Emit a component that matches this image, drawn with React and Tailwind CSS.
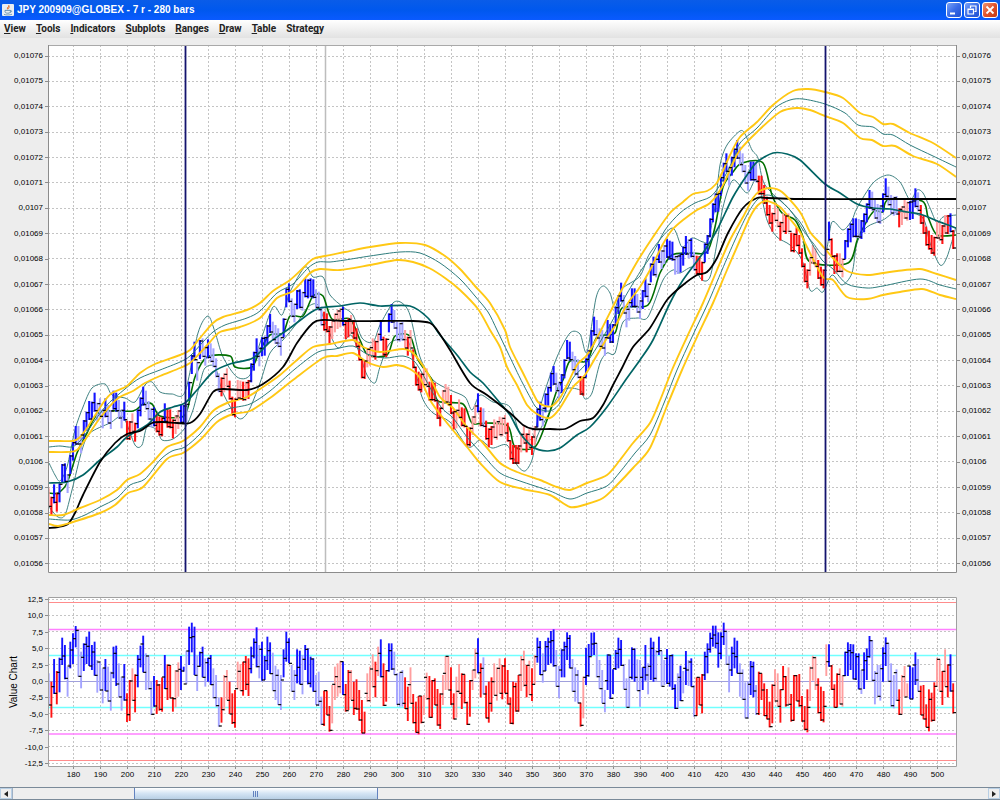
import React from "react";

const FIRST_BAR = 171;
const BAR_STEP = 2.7;
const barX = (n) => 73 + (n - 180) * BAR_STEP;

const COLORS = { B: "#1414ff", b: "#a4a4ff", R: "#ff1414", r: "#ff9f9f" };

// Top of each seven-tick range bar, in thirds of a chart unit, from bar 171 on.
const PRICE_BARS = `r1465 R1490 B1453 R1478 B1450 B1392 B1390 b1422 B1365
B1325 B1278 b1278 b1302 B1260 B1235 B1203 B1205 B1178 b1208
b1195 b1228 B1195 b1215 b1230 B1172 B1178 b1200 b1228 B1205
R1262 R1263 r1240 R1268 B1228 B1192 B1160 b1172 b1203 b1225
B1222 R1240 R1250 R1252 B1210 R1226 R1228 R1258 r1245 r1230
B1213 B1215 b1210 B1145 B1065 B1025 b1085 B1020 b1015 b1040
B1018 b1030 b1045 b1075 b1120 R1132 r1120 r1105 R1142 R1190
R1195 r1140 r1142 R1145 r1145 R1140 B1090 B1055 B1015 b1042
B1012 B1010 B975 B942 b965 b975 b985 b1010 B955 B865
B850 b895 b910 B870 B868 b875 B835 B838 B835 B838
b868 b875 b920 R935 R940 R978 r960 r940 r930 r925
B920 R960 R955 r945 R960 R985 R1025 R1078 R1080 r1045
r1040 r1015 R1022 r1000 B965 R1010 R1015 B940 B912 b930
b965 b968 b965 r990 R1010 r990 R1048 R1100 R1115 R1120
r1100 r1105 R1145 R1145 R1148 R1200 R1222 r1170 r1152 r1160
R1185 R1232 r1228 r1198 R1222 R1225 R1280 R1282 r1248 r1215
B1180 R1222 b1225 R1262 R1285 R1278 r1258 r1262 r1250 r1252
r1245 R1268 R1322 R1335 R1335 R1335 r1300 r1275 R1300 r1288
R1308 r1278 B1225 B1205 b1222 B1180 B1160 B1118 B1098 b1118
b1145 B1122 B1078 B1020 B1025 b1055 b1068 b1078 R1128 R1130
B1075 B1050 B990 B950 b960 b985 b990 b1010 B960 B972
B972 B920 B885 B848 b885 b925 b905 B865 B865 b882
b900 B870 B835 b850 B790 B770 b775 B732 b750 b735
B717 B722 B725 b767 b765 B760 B740 B708 b718 B715
b755 R767 R768 R785 B730 B705 B655 B610 B580 B578
B530 B488 B460 b500 B470 B445 B420 b440 b460 b495
b515 B485 B485 b490 R527 R527 R555 R590 R615 R638
r607 r625 R665 r640 R645 r640 R698 R700 R682 R705
R745 R790 R808 r770 r735 r745 R780 R800 R808 r745
B665 R715 R765 R760 r760 r775 B720 B685 B670 B655
B655 b657 B660 B640 B610 B570 b575 b600 b612 b615
B580 B535 b560 b585 b590 b588 R625 r618 r600 r605
B603 B600 B565 b577 R615 R645 R680 R692 R705 R710
r660 r665 R675 r645 R645 B640 R690`
  .split(/\s+/)
  .map((s) => ({ color: COLORS[s[0]], top: Number(s.slice(1)) / 3 }));

// High, low and close of the value chart, in thirds of a chart unit below 590.
const VALUE_BARS = `b250,345,345 R275,383,290 B207,312,310 R243,343,247 B203,307,208 B143,225,198 B165,268,265 b230,320,228 B155,235,180
B130,222,146 B108,172,121 b120,260,259 b185,295,202 B160,243,163 B140,222,169 B125,228,228 B165,240,186 B155,257,256 b210,308,216
b215,302,300 b235,340,234 B207,303,303 b230,335,333 b245,362,249 B170,265,190 B167,288,282 b220,322,321 b260,362,261 B222,332,330
R310,396,374 R270,393,273 r235,332,331 R253,367,256 B195,292,208 B167,232,162 B137,247,247 b190,300,198 b195,298,296 b275,375,373
B258,350,348 R270,372,285 R282,362,358 R262,365,261 B195,297,296 R223,330,226 R225,325,324 R322,365,326 r240,352,243 r217,320,238
B198,300,243 B230,245,282 b182,282,183 B110,225,143 B98,187,140 B110,255,256 b195,303,229 B185,230,188 B170,262,262 b205,290,218
B203,275,205 B195,285,284 b235,325,323 b255,350,347 b322,410,408 R322,398,359 r255,362,260 r240,330,331 R275,372,372 R310,402,398
R300,413,296 r215,298,244 r222,303,302 R215,317,216 R198,300,283 R205,318,236 B170,250,198 B145,205,157 B112,232,230 b165,265,178
B155,272,270 B198,270,212 B140,240,182 B157,252,251 b188,302,302 b227,330,256 b238,345,344 b255,360,270 B178,262,205 B125,215,157
B145,220,220 b225,305,304 b240,330,256 B178,280,232 B182,283,283 b195,313,208 B165,240,178 B175,283,280 B200,292,207 B205,305,304
b255,345,345 b245,348,334 b320,405,403 R302,408,302 R302,375,375 R348,425,421 r285,400,283 r230,330,260 r220,320,290 r212,310,215
B215,315,314 R282,365,362 R240,360,247 r240,330,331 R275,375,355 R268,360,357 R300,392,390 R330,430,429 R365,430,310 r250,335,332
r230,335,237 r193,292,290 R215,322,242 r170,258,190 B148,262,260 R220,348,346 R240,335,242 B160,245,182 B160,240,237 b185,255,254
b250,345,343 b248,350,247 b240,350,340 R262,357,356 R290,393,284 r232,340,340 R312,400,398 R335,428,427 R318,433,318 R318,400,397
r315,375,262 r248,330,326 R258,383,382 R270,383,272 R265,345,345 R297,407,405 R310,417,312 r255,345,250 r198,300,199 r198,300,300
R232,345,342 R310,388,387 r260,383,304 r222,310,310 R250,357,253 R253,340,338 R335,405,403 R270,380,272 r240,300,240 r175,265,190
B145,250,248 R220,322,235 b202,313,312 R287,385,384 R275,398,340 R262,365,275 r220,316,316 r232,332,235 r205,310,310 R225,328,228
R205,310,310 R240,343,342 R322,402,400 R275,403,290 R278,365,363 R255,365,255 r198,303,209 r182,290,286 R225,322,226 r212,315,314
R235,333,283 r195,285,200 B143,218,172 B153,255,254 b190,278,243 B153,243,170 B143,225,156 B123,220,152 B118,230,227 b180,290,289
b228,325,240 B178,262,180 B155,262,170 B127,210,145 B135,235,234 b207,305,304 b232,335,255 b240,340,339 R338,410,406 r260,385,262
B173,285,257 B162,260,200 B128,198,162 B127,195,160 b160,262,260 b210,297,296 b240,340,340 b300,367,272 B193,300,195 B195,327,325
B238,312,236 B180,240,190 B143,235,178 B150,228,226 b222,298,298 b265,352,352 b208,352,262 B172,268,178 B175,275,262 b208,303,302
b210,350,262 B232,300,232 B165,272,255 b220,313,229 B143,270,175 B155,275,265 b180,272,185 B140,195,182 b182,290,289 b210,285,205
B177,282,280 B195,290,197 B193,300,296 B283,357,355 b250,357,262 B227,333,332 b243,310,235 B183,285,240 b210,288,216 B205,290,290
b285,380,377 R262,378,262 R262,345,345 R252,370,255 B185,270,200 B160,250,178 B128,188,145 B107,170,135 B107,175,160 B127,233,190
B127,208,140 B98,165,124 b122,225,223 b197,307,240 B170,258,190 B143,235,200 B152,250,250 b220,320,250 b238,330,328 b277,385,384
b275,385,283 B213,315,230 B215,322,303 b285,375,371 R245,375,250 R250,330,300 R280,378,377 R297,388,387 R335,412,410 R283,400,286
r238,335,333 r250,350,349 R298,398,299 R228,300,260 R258,350,345 r232,342,343 R312,395,391 R255,392,257 R255,333,333 R252,350,347
R318,395,393 R348,420,418 R298,427,352 r230,333,234 r197,272,203 r200,300,285 R265,370,368 R290,393,390 R303,397,349 r163,258,215
B163,230,228 R225,300,298 R283,353,352 R250,352,253 r235,343,342 r257,350,257 B185,258,187 B157,258,182 B162,240,188 B163,268,267
B190,270,200 B190,298,297 b240,312,240 B187,297,212 B175,270,200 B138,203,152 b150,273,271 b243,343,250 b225,320,319 b225,332,236
B172,275,190 B142,228,160 b158,275,274 b220,350,347 b255,355,248 b238,333,331 R298,375,373 r255,373,260 r228,320,321 r280,320,228
B228,328,327 B232,328,225 B187,285,270 b207,305,304 R287,375,375 R285,388,387 R343,412,412 R298,424,328 R308,395,391 R277,393,289
r203,290,208 r207,305,304 R243,345,244 r178,290,290 R223,322,225 B193,305,303 R280,370,368`
  .split(/\s+/)
  .map((s) => {
    const [hi, lo, close] = s.slice(1).split(",").map((v) => 590 + Number(v) / 3);
    return { color: COLORS[s[0]], hi, lo, close };
  });

const BANDS = {
  u1: "49,441 60,441 73,441 79,438 87,428 103,403 112,393 127,386 140,373 155,364 180,355 190,350 200,338 213,323 223,317 247,310 260,303 273,291 290,280 303,268 313,259 325,256 345,252 370,247 400,243 425,245 445,256 460,269 475,286 490,303 505,330 510,347 523,373 533,393 538,402 545,406 552,406 560,398 567,385 577,365 587,355 597,338 620,293 637,262 653,237 670,213 683,202 693,194 707,191 716,184 722,173 730,155 740,137 757,122 773,105 793,91 808,89 825,92 843,98 860,113 873,117 883,124 893,124 910,133 933,143 956,158",
  u2: "49,447 60,446 72,447 80,441 87,432 105,407 125,389 140,378 160,370 180,362 190,356 203,342 213,332 225,325 247,318 260,311 277,293 293,284 308,268 318,262 330,262 345,260 370,256 400,252 420,253 440,263 460,279 475,296 488,312 497,330 508,353 520,378 530,397 537,408 550,411 560,403 573,378 585,365 597,347 610,325 625,297 640,272 653,253 665,230 680,213 695,203 710,197 720,185 733,160 740,143 757,128 775,108 790,100 803,99 825,104 845,113 858,125 873,127 883,134 893,135 910,145 933,156 956,167",
  u3: "49,452 67,452 77,450 87,437 100,418 117,399 133,391 145,383 160,376 180,368 190,363 200,353 210,342 220,332 240,327 260,318 277,298 293,291 310,273 320,269 340,270 370,265 397,260 413,262 429,268 445,278 460,290 478,309 490,330 500,347 507,367 517,385 527,405 537,414 550,418 560,408 573,387 585,375 597,355 607,338 617,323 628,303 640,287 650,270 663,244 672,230 683,220 697,210 710,203 722,187 733,163 740,150 757,132 780,112 797,108 810,110 825,116 843,123 860,138 872,140 883,146 895,146 913,156 937,164 956,177",
  l1: "49,515 63,515 80,508 100,500 117,490 127,480 140,474 153,462 167,447 183,441 200,427 213,411 227,403 247,397 263,387 280,375 297,360 313,347 330,344 353,340 363,347 380,352 403,349 413,353 427,372 440,397 453,408 467,427 483,443 500,463 517,472 540,480 557,487 570,490 587,483 607,475 620,460 633,443 650,423 661,398 672,370 687,337 703,303 717,270 730,240 743,217 753,198 760,191 770,188 782,192 800,212 810,232 820,243 833,258 847,271 867,275 883,273 897,271 920,269 937,274 956,280",
  l2: "49,519 70,520 85,515 100,507 117,498 130,485 145,479 160,460 172,451 185,447 200,434 213,418 228,409 250,404 270,391 295,369 318,352 335,349 353,346 367,354 385,358 403,356 415,362 427,382 441,407 453,418 467,437 483,455 500,473 520,481 550,491 570,499 587,493 607,486 620,472 635,453 650,435 664,403 677,370 692,337 708,303 722,270 735,240 747,215 757,200 767,195 780,200 800,222 810,240 822,260 833,269 847,284 867,288 883,286 920,279 940,285 956,289",
  l3: "49,524 58,526 70,523 100,513 115,505 128,493 143,487 167,459 183,453 200,440 217,422 233,414 250,411 270,398 293,380 323,358 337,356 353,353 367,362 383,367 397,365 410,369 420,378 430,400 443,418 467,447 480,463 500,482 523,489 550,495 570,507 587,504 603,498 617,485 633,468 650,448 667,406 682,370 697,337 713,303 727,270 740,240 750,217 758,205 767,201 780,207 790,219 800,232 807,247 823,277 833,280 847,297 867,299 883,295 900,292 922,289 940,295 956,299",
};

const BLACK =
  "49,528 58,527 68,524 75,513 83,495 100,462 115,443 127,434 140,431 152,423 163,422 177,423 190,423 200,414 213,392 223,389 247,390 263,384 283,367 297,343 313,323 323,320 345,321 380,321 413,321 430,323 437,330 450,350 470,383 487,395 510,413 523,425 533,429 550,429 565,429 580,421 593,418 603,405 613,385 622,368 633,347 650,328 667,300 683,285 697,275 707,272 717,258 728,233 743,208 757,198 767,198 800,199 880,199 956,199";
const TEAL =
  "49,483 67,482 83,475 100,460 117,447 127,437 147,425 160,412 173,407 185,403 197,390 213,372 230,364 253,358 270,342 290,328 310,313 320,308 340,306 360,303 380,306 410,306 428,318 440,335 457,355 470,372 483,383 500,403 510,415 520,433 533,447 547,451 560,448 577,435 590,427 607,407 627,378 640,360 653,340 670,303 683,280 703,253 717,230 733,197 747,175 757,162 773,153 787,154 800,160 825,184 840,193 857,204 873,208 890,209 907,212 920,214 940,222 956,228";
const GREEN =
  "49,493 58,493 67,483 77,453 87,433 100,412 133,411 143,404 152,404 160,416 182,417 188,407 195,377 207,357 230,356 235,367 252,367 260,350 270,335 283,333 290,316 303,316 313,296 323,296 332,319 350,319 360,340 368,355 387,355 395,336 410,336 418,360 432,380 438,401 463,404 472,423 487,423 508,426 515,447 535,447 547,420 557,390 563,380 570,361 587,361 597,337 615,333 622,308 648,305 660,273 672,255 690,253 707,252 715,227 723,187 733,172 742,163 763,163 772,195 782,213 795,220 803,237 810,262 848,263 858,238 873,212 883,212 888,200 922,201 928,217 937,235 956,235";
const ENVELOPE_TOP =
  "49,463 55,475 60,481 67,467 75,430 83,407 92,388 105,384 112,395 125,398 135,402 145,385 152,382 160,392 172,394 185,392 198,333 208,316 215,332 223,357 237,377 250,375 260,343 273,307 282,315 290,292 305,267 313,277 323,277 330,295 343,307 353,315 362,338 373,342 380,325 393,303 402,303 410,315 420,357 433,380 450,390 465,397 472,410 480,395 493,402 510,407 521,436 533,437 543,397 557,357 570,333 580,334 587,352 596,298 603,286 610,293 615,308 622,289 640,276 650,253 672,228 682,247 692,238 703,242 708,240 715,207 720,165 727,145 740,131 745,134 752,150 758,158 765,185 790,210 803,230 813,243 825,255 832,222 843,230 852,220 857,208 873,183 888,175 900,182 910,200 917,190 923,193 930,208 937,223 943,217 956,215";
const ENVELOPE_BOTTOM =
  "49,507 58,517 65,515 72,490 82,450 90,433 110,423 123,417 135,445 142,445 147,427 157,430 162,440 173,439 185,428 193,410 200,383 205,368 215,367 223,393 238,418 248,412 260,383 270,353 283,340 297,323 308,307 318,305 327,327 338,348 350,335 357,347 367,375 375,383 380,367 390,343 407,340 413,360 422,397 433,413 450,422 468,447 480,440 492,448 507,445 517,465 525,471 532,460 537,437 547,417 563,390 580,390 585,399 592,393 600,363 607,353 615,353 623,322 637,318 648,317 663,280 673,270 680,273 693,267 702,280 710,277 717,243 723,207 733,180 747,193 757,180 767,220 777,237 790,245 802,260 810,290 817,288 823,292 832,275 842,285 852,273 857,243 867,227 883,220 897,212 922,217 930,243 940,265 947,257 956,227";

function smooth(points) {
  const p = points.split(" ").map((s) => s.split(",").map(Number));
  let d = `M${p[0][0]} ${p[0][1]}`;
  for (let i = 0; i < p.length - 1; i++) {
    const a = p[i - 1] || p[i];
    const b = p[i];
    const c = p[i + 1];
    const e = p[i + 2] || c;
    const k = 7;
    d += `C${b[0] + (c[0] - a[0]) / k} ${b[1] + (c[1] - a[1]) / k} ${c[0] - (e[0] - b[0]) / k} ${c[1] - (e[1] - b[1]) / k} ${c[0]} ${c[1]}`;
  }
  return d;
}

const range = (n) => Array.from({ length: n }, (_, i) => i);
const GRID_X = range(33).map((i) => 73 + i * 27);
const PRICE_LABELS = range(21).map((i) => {
  const v = 1076 - i;
  return v % 10 === 0 ? `0,0${v / 10}` : `0,0${v}`;
});
const VALUE_LABELS = ["12,5", "10,0", "7,5", "5,0", "2,5", "0,0", "-2,5", "-5,0", "-7,5", "-10,0", "-12,5"];

function Curve({ points, color, width = 1 }) {
  return <path d={smooth(points)} fill="none" stroke={color} strokeWidth={width} strokeLinejoin="round" />;
}

function Grid({ y0, y1, rows }) {
  return (
    <g stroke="#c4c4c4" strokeWidth="1" strokeDasharray="2 2">
      {GRID_X.map((x) => (
        <path key={x} d={`M${x + 0.5} ${y0}V${y1}`} />
      ))}
      {rows.map((y) => (
        <path key={y} d={`M48 ${Math.floor(y) + 0.5}H957`} />
      ))}
    </g>
  );
}

function PriceChart() {
  const height = 19;
  return (
    <svg viewBox="48 45 909 528" preserveAspectRatio="none" className="block h-full w-full bg-white" role="img" aria-label="Price chart">
      <Grid y0={45} y1={573} rows={range(21).map((i) => 56 + i * 25.37)} />
      <path d="M325.5 45V573" stroke="#bdbdbd" strokeWidth="1.5" />
      <Curve points={ENVELOPE_TOP} color="#3f8282" />
      <Curve points={ENVELOPE_BOTTOM} color="#3f8282" />
      <Curve points={GREEN} color="#006e00" width={1.6} />
      {PRICE_BARS.map((bar, i) => (
        <path key={i} d={`M${barX(FIRST_BAR + i)} ${bar.top}v${height}`} stroke={bar.color} strokeWidth="2.1" />
      ))}
      <Curve points={BANDS.u2} color="#2d7c7c" />
      <Curve points={BANDS.l2} color="#2d7c7c" />
      <Curve points={TEAL} color="#006464" width={1.7} />
      <Curve points={BLACK} color="#000000" width={1.8} />
      {["u1", "u3", "l1", "l3"].map((k) => (
        <Curve key={k} points={BANDS[k]} color="#ffc814" width={1.9} />
      ))}
      {PRICE_BARS.map((bar, i) => {
        const next = PRICE_BARS[i + 1] || bar;
        const close = next.top >= bar.top ? bar.top + height - 1 : bar.top + 1;
        return <path key={i} d={`M${barX(FIRST_BAR + i)} ${close}h3`} stroke="#000" strokeWidth="1.2" />;
      })}
      <path d="M185.5 45V573M825.5 45V573" stroke="#14146e" strokeWidth="1.8" />
      <path d="M48 45.5H957" stroke="#a9a9a9" />
      <path d="M48.5 45V572.5H956.5V45" fill="none" stroke="#8c8c8c" />
    </svg>
  );
}

function ValueChart() {
  return (
    <svg viewBox="48 597 909 170" preserveAspectRatio="none" className="block h-full w-full bg-white" role="img" aria-label="Value chart">
      <Grid y0={597} y1={767} rows={range(11).map((i) => 599 + i * 16.4)} />
      <path d="M48 602.5H957M48 760.5H957" stroke="#ff8c8c" />
      <path d="M48 629.5H957M48 734H957" stroke="#ff80ff" strokeWidth="1.3" />
      <path d="M48 655.5H957M48 707.5H957" stroke="#70ffff" strokeWidth="1.5" />
      <path d="M48 681.5H957" stroke="#a0a0dc" />
      {VALUE_BARS.map((bar, i) => (
        <path key={i} d={`M${barX(FIRST_BAR + i)} ${bar.hi}V${bar.lo}`} stroke={bar.color} strokeWidth="1.9" />
      ))}
      {VALUE_BARS.map((bar, i) => (
        <path key={i} d={`M${barX(FIRST_BAR + i)} ${bar.close}h3`} stroke="#000" strokeWidth="1.2" />
      ))}
      <path d="M48.5 597.5H956.5V766.5H48.5Z" fill="none" stroke="#a0a0a0" />
    </svg>
  );
}

function JavaCup() {
  return (
    <svg viewBox="0 0 12 12" className="size-3" aria-hidden="true">
      <rect width="12" height="12" rx="1" fill="#e9eef2" />
      <path d="M6.8 1C7.8 2.6 4.6 3 5.4 5.4M8 2.6C6.6 3.2 6.2 4 6.8 5.2" fill="none" stroke="#e8762c" strokeWidth="1" />
      <path d="M3 6.4H8.4V7.4C8.4 8.8 7.6 9.2 5.8 9.2S3 8.6 3 7.4ZM8.4 6.6C10.2 6.4 10 8.2 8.1 8.2" fill="none" stroke="#5b87a8" strokeWidth=".9" />
      <path d="M2 10.4C4 11.2 8 11.2 10 10.2" fill="none" stroke="#5b87a8" strokeWidth=".8" />
    </svg>
  );
}

function WindowButton({ label, danger, children }) {
  return (
    <button
      type="button"
      aria-label={label}
      className={`flex size-4 items-center justify-center rounded-[3px] border border-white ${
        danger ? "bg-linear-to-br from-[#f0936f] via-[#e0532c] to-[#c43a14]" : "bg-linear-to-br from-[#7aa2f6] via-[#3a6ce8] to-[#1f4fd0]"
      }`}
    >
      <svg viewBox="0 0 14 14" className="size-3.5" fill="none" stroke="#fff" aria-hidden="true">
        {children}
      </svg>
    </button>
  );
}

const MENUS = [
  ["", "V", "iew"],
  ["", "T", "ools"],
  ["", "I", "ndicators"],
  ["", "S", "ubplots"],
  ["", "R", "anges"],
  ["", "D", "raw"],
  ["", "T", "able"],
  ["Strate", "g", "y"],
];

function PriceAxis({ side }) {
  const left = side === "left";
  return (
    <div className={`flex flex-col justify-between pt-1.5 pb-1 ${left ? "w-12 items-end" : "w-[43px] items-start"}`}>
      {PRICE_LABELS.map((t) => (
        <div key={t} className={`flex h-2.5 items-center gap-0.5 ${left ? "" : "flex-row-reverse"}`}>
          <span className="leading-[10px]">{t}</span>
          <span className="h-px w-[3px] bg-[#8c8c8c]" />
        </div>
      ))}
    </div>
  );
}

function ScrollArrow({ dir }) {
  return (
    <button type="button" aria-label={`Scroll ${dir}`} className="flex w-3 items-center justify-center border border-[#b8cfe5] bg-[#eeeeee]">
      <svg viewBox="0 0 6 8" className="h-2 w-1.5" aria-hidden="true">
        <path d={dir === "left" ? "M5 1V7L1 4Z" : "M1 1V7L5 4Z"} fill="#222" />
      </svg>
    </button>
  );
}

export default function App() {
  return (
    <div className="flex min-h-screen flex-col bg-[#ededed] font-['Liberation_Sans',Arial,sans-serif] text-[8px] text-black">
      <header className="flex h-5 items-center gap-[3px] bg-linear-to-b from-[#0a5ce8] via-[#0058ee] to-[#0a5aff] px-0.5">
        <JavaCup />
        <h1 className="flex-1 text-[10px] leading-5 font-bold whitespace-nowrap text-white">
          JPY 200909@GLOBEX - 7 r - 280 bars
        </h1>
        <div className="flex gap-0.5">
          <WindowButton label="Minimize">
            <path d="M3 10.5H8" strokeWidth="2" />
          </WindowButton>
          <WindowButton label="Restore">
            <path d="M5.5 5V3H11V8.5H9.5M3 6H8.5V11H3ZM3 6.5H8.5" strokeWidth="1.2" />
          </WindowButton>
          <WindowButton label="Close" danger>
            <path d="M3.5 3.5L10.5 10.5M10.5 3.5L3.5 10.5" strokeWidth="1.8" />
          </WindowButton>
        </div>
      </header>

      <nav className="flex h-[18px] items-center gap-2.5 bg-linear-to-b from-white to-[#e2e2e2] px-1 font-['Roboto',sans-serif] text-[10px] leading-[18px] font-bold text-[#222]">
        {MENUS.map(([pre, key, post]) => (
          <button key={pre + key + post} type="button">
            {pre}
            <span className="underline [text-decoration-skip-ink:none]">{key}</span>
            {post}
          </button>
        ))}
      </nav>

      <main className="flex flex-1 flex-col pt-[7px]">
        <section className="flex h-[528px]">
          <PriceAxis side="left" />
          <div className="min-w-0 flex-1">
            <PriceChart />
          </div>
          <PriceAxis side="right" />
        </section>

        <section className="mt-6 flex h-[170px] pr-[43px]">
          <div className="flex w-12 justify-between">
            <div className="flex items-center pl-2">
              <span className="rotate-180 text-[10px] leading-3 whitespace-nowrap [writing-mode:vertical-rl]">Value Chart</span>
            </div>
            <div className="flex flex-col items-end justify-between pb-px">
              {VALUE_LABELS.map((t) => (
                <div key={t} className="flex h-[5px] items-center gap-0.5">
                  <span className="leading-[5px]">{t}</span>
                  <span className="h-px w-[3px] bg-[#8c8c8c]" />
                </div>
              ))}
            </div>
          </div>
          <div className="min-w-0 flex-1">
            <ValueChart />
          </div>
        </section>

        <div className="mr-[43px] ml-12 grid h-5 grid-cols-[repeat(33,minmax(0,1fr))] pr-1.5 pl-3 text-center">
          {range(33).map((i) => (
            <div key={i} className="flex flex-col items-center">
              <span className="h-0.5 w-px bg-[#8c8c8c]" />
              <span className="leading-3">{180 + i * 10}</span>
            </div>
          ))}
        </div>
      </main>

      <footer className="flex h-[13px] border-y border-[#7a8a99] bg-[#eeeeee]">
        <ScrollArrow dir="left" />
        <div className="flex flex-1 border-l border-[#9fb0c4]" role="scrollbar" aria-label="Bars" aria-controls="root" aria-orientation="horizontal" aria-valuenow={13} aria-valuemin={0} aria-valuemax={100}>
          <div className="w-[12.4%]" />
          <div className="flex w-1/4 items-center justify-center gap-px border-x border-[#6382bf] bg-linear-to-b from-white via-[#d4e4f4] to-[#b8cfe5]">
            <span className="h-1.5 w-px bg-[#6382bf]" />
            <span className="h-1.5 w-px bg-[#6382bf]" />
            <span className="h-1.5 w-px bg-[#6382bf]" />
          </div>
        </div>
        <ScrollArrow dir="right" />
      </footer>
    </div>
  );
}
